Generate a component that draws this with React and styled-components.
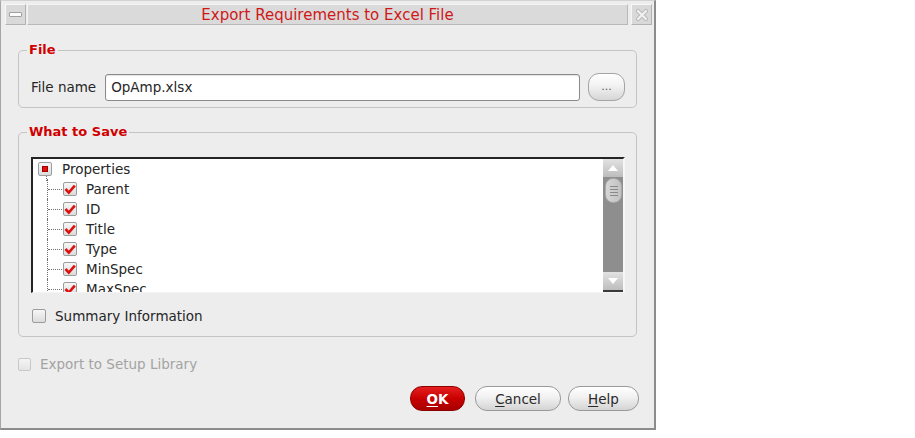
import React from "react";
import styled, { createGlobalStyle, css } from "styled-components";

const GlobalStyle = createGlobalStyle`
  html, body {
    margin: 0;
    padding: 0;
    background: #ffffff;
  }
  body {
    font-family: "DejaVu Sans", "Liberation Sans", sans-serif;
    font-size: 13.5px;
    color: #262626;
  }
  * {
    box-sizing: border-box;
  }
`;

const Dialog = styled.div`
  width: 656px;
  height: 430px;
  display: flex;
  flex-direction: column;
  background: #ededed;
  border-top: 1px solid #d2d2d2;
  border-left: 1px solid #a6a6a6;
  border-right: 2px solid #8c8c8c;
  border-bottom: 2px solid #8c8c8c;
`;

const TitleBar = styled.div`
  display: flex;
  gap: 1px;
  padding: 3px 2px 0 4px;
  height: 24px;
`;

const TitleButton = styled.div`
  width: 21px;
  height: 21px;
  flex-shrink: 0;
  display: flex;
  align-items: center;
  justify-content: center;
  background: #d9d9d9;
  border: 1px solid;
  border-color: #f7f7f7 #b2b2b2 #b2b2b2 #f7f7f7;
  margin-left: ${(p) => p.$gap || 0}px;
`;

const MinIcon = styled.span`
  width: 13px;
  height: 5px;
  background: #fbfbfb;
  border: 1px solid #a0a0a0;
  border-radius: 1px;
`;

const TitleText = styled.div`
  flex: 1;
  display: flex;
  align-items: center;
  justify-content: center;
  background: #dadada;
  border: 1px solid;
  border-color: #f4f4f4 #b8b8b8 #b8b8b8 #f4f4f4;
  color: #d01818;
  font-size: 15px;
`;

const Body = styled.div`
  display: flex;
  flex-direction: column;
  padding: 17px 17px 0 17px;
`;

const Group = styled.fieldset`
  margin: ${(p) => p.$mt || 0}px 0 0 0;
  min-width: 0;
  border: 1px solid #c4c4c4;
  border-radius: 5px;
  padding: ${(p) => p.$pt}px 11px ${(p) => p.$pb}px 8px;
`;

const Legend = styled.legend`
  padding: 0 2px;
  font-size: 13px;
  font-weight: bold;
  line-height: 16px;
  color: #d00000;
`;

const FileRow = styled.div`
  display: flex;
  align-items: center;
  padding-left: 4px;
  height: 28px;
`;

const Label = styled.span`
  margin-right: 9px;
`;

const TextInput = styled.div`
  flex: 1;
  height: 27px;
  display: flex;
  align-items: center;
  padding-left: 5px;
  background: #ffffff;
  border: 1px solid #8a8a8a;
  border-radius: 3px;
  box-shadow: inset 0 1px 1px rgba(0, 0, 0, 0.12);
`;

const BrowseButton = styled.div`
  width: 37px;
  height: 28px;
  margin-left: 8px;
  display: flex;
  align-items: center;
  justify-content: center;
  border: 1px solid #a4a4a4;
  border-radius: 11px;
  background: linear-gradient(#ffffff, #f2f2f2 45%, #d6d6d6);
  color: #555;
  font-size: 11px;
  padding-bottom: 2px;
`;

const TreeBox = styled.div`
  margin-left: 4px;
  height: 136px;
  display: flex;
  background: #ffffff;
  border-top: 2px solid #242424;
  border-left: 2px solid #242424;
  border-right: 2px solid #f7f7f7;
  border-bottom: 1px solid #f4f4f4;
`;

const TreeRows = styled.div`
  flex: 1;
  overflow: hidden;
  padding-left: 5px;
`;

const TreeRow = styled.div`
  display: flex;
  align-items: center;
  height: 20px;
`;

const RootTail = styled.span`
  position: relative;
  width: 14px;
  height: 14px;
  flex-shrink: 0;

  /* dotted line that drops from the root box to the first child */
  &::after {
    content: "";
    position: absolute;
    left: 8px;
    top: 14px;
    height: 5px;
    border-left: 1px dotted #707070;
  }
`;

const Branch = styled.span`
  align-self: stretch;
  width: 16px;
  margin-left: 9px;
  display: flex;
  align-items: center;
  border-left: 1px dotted #707070;
`;

const BranchTick = styled.span`
  width: 14px;
  border-top: 1px dotted #707070;
`;

const RowText = styled.span`
  margin-left: ${(p) => p.$gap || 9}px;
  color: ${(p) => (p.$disabled ? "#a3a3a3" : "#262626")};
  white-space: nowrap;
`;

const Box = styled.span`
  width: ${(p) => p.$size || 14}px;
  height: ${(p) => p.$size || 14}px;
  flex-shrink: 0;
  display: flex;
  align-items: center;
  justify-content: center;
  border: 1px solid #9c9c9c;
  border-radius: 2px;
  background: linear-gradient(#f6f6f6, #dcdcdc);
  ${(p) =>
    p.$disabled &&
    css`
      border-color: #c8c8c8;
      background: linear-gradient(#f4f4f4, #e4e4e4);
    `}
`;

const PartialMark = styled.span`
  width: 6px;
  height: 6px;
  background: #e01010;
  border: 1px solid #a00000;
`;

const Scrollbar = styled.div`
  width: 20px;
  display: flex;
  flex-direction: column;
  background: #8e8e8e;
`;

const ScrollButton = styled.div`
  height: 18px;
  display: flex;
  align-items: center;
  justify-content: center;
  background: linear-gradient(#e2e2e2, #bdbdbd);
  ${(p) =>
    p.$down &&
    css`
      margin-top: auto;
      border-bottom: 2px solid #3a3a3a;
      height: 20px;
    `}
`;

const Thumb = styled.div`
  margin: 1px 1px 0 2px;
  height: 25px;
  border-radius: 8px;
  display: flex;
  flex-direction: column;
  align-items: center;
  justify-content: center;
  gap: 2px;
  background: linear-gradient(90deg, #d6d6d6, #c2c2c2);
  border: 1px solid #a8a8a8;
`;

const Grip = styled.span`
  width: 8px;
  height: 1px;
  background: #8a8a8a;
`;

const OptionRow = styled.div`
  display: flex;
  align-items: center;
  height: 20px;
  margin: ${(p) => p.$mt || 0}px 0 0 ${(p) => p.$ml || 0}px;
`;

const ButtonRow = styled.div`
  display: flex;
  justify-content: flex-end;
  margin: 12px -2px 0 0;
`;

const Button = styled.div`
  width: ${(p) => p.$w}px;
  height: 25px;
  margin-left: ${(p) => p.$ml || 0}px;
  display: flex;
  align-items: center;
  justify-content: center;
  border-radius: 12px;
  border: 1px solid #999999;
  background: linear-gradient(#ffffff, #f1f1f1 45%, #d4d4d4);
  color: #2a2a2a;
  ${(p) =>
    p.$primary &&
    css`
      border-color: #8c0000;
      background: linear-gradient(#e52020, #c80000 50%, #a80000);
      color: #ffffff;
      font-weight: bold;
    `}

  u {
    text-decoration-thickness: 1px;
    text-underline-offset: 2px;
  }
`;

const Check = () => (
  <svg width="12" height="11" viewBox="0 0 12 11">
    <path d="M1.5 5 L4.8 8.6 L10.8 1.6" fill="none" stroke="#dd1010" strokeWidth="2.6" />
  </svg>
);

const CloseIcon = () => (
  <svg width="14" height="14" viewBox="0 0 14 14">
    <path d="M3 3 L11 11 M11 3 L3 11" stroke="#b8b8b8" strokeWidth="4.2" strokeLinecap="round" />
    <path d="M3 3 L11 11 M11 3 L3 11" stroke="#f2f2f2" strokeWidth="2.2" strokeLinecap="round" />
  </svg>
);

const Arrow = ({ down }) => (
  <svg width="12" height="8" viewBox="0 0 12 8">
    <path d={down ? "M1 1 L11 1 L6 7 Z" : "M1 7 L11 7 L6 1 Z"} fill="#ffffff" />
  </svg>
);

const properties = ["Parent", "ID", "Title", "Type", "MinSpec", "MaxSpec"];

export default function App() {
  return (
    <>
      <GlobalStyle />
      <Dialog>
        <TitleBar>
          <TitleButton>
            <MinIcon />
          </TitleButton>
          <TitleText>Export Requirements to Excel File</TitleText>
          <TitleButton $gap={2}>
            <CloseIcon />
          </TitleButton>
        </TitleBar>

        <Body>
          <Group $pt={15} $pb={6}>
            <Legend>File</Legend>
            <FileRow>
              <Label>File name</Label>
              <TextInput>OpAmp.xlsx</TextInput>
              <BrowseButton>...</BrowseButton>
            </FileRow>
          </Group>

          <Group $mt={16} $pt={17} $pb={10}>
            <Legend>What to Save</Legend>
            <TreeBox>
              <TreeRows>
                <TreeRow>
                  <RootTail>
                    <Box>
                      <PartialMark />
                    </Box>
                  </RootTail>
                  <RowText $gap={10}>Properties</RowText>
                </TreeRow>
                {properties.map((name) => (
                  <TreeRow key={name}>
                    <Branch>
                      <BranchTick />
                    </Branch>
                    <Box>
                      <Check />
                    </Box>
                    <RowText>{name}</RowText>
                  </TreeRow>
                ))}
              </TreeRows>
              <Scrollbar>
                <ScrollButton>
                  <Arrow />
                </ScrollButton>
                <Thumb>
                  <Grip />
                  <Grip />
                  <Grip />
                  <Grip />
                </Thumb>
                <ScrollButton $down>
                  <Arrow down />
                </ScrollButton>
              </Scrollbar>
            </TreeBox>
            <OptionRow $mt={13} $ml={5}>
              <Box />
              <RowText>Summary Information</RowText>
            </OptionRow>
          </Group>

          <OptionRow $mt={17}>
            <Box $size={13} $disabled />
            <RowText $disabled>Export to Setup Library</RowText>
          </OptionRow>

          <ButtonRow>
            <Button $w={55} $primary>
              <u>O</u>K
            </Button>
            <Button $w={86} $ml={10}>
              <u>C</u>ancel
            </Button>
            <Button $w={71} $ml={7}>
              <u>H</u>elp
            </Button>
          </ButtonRow>
        </Body>
      </Dialog>
    </>
  );
}
